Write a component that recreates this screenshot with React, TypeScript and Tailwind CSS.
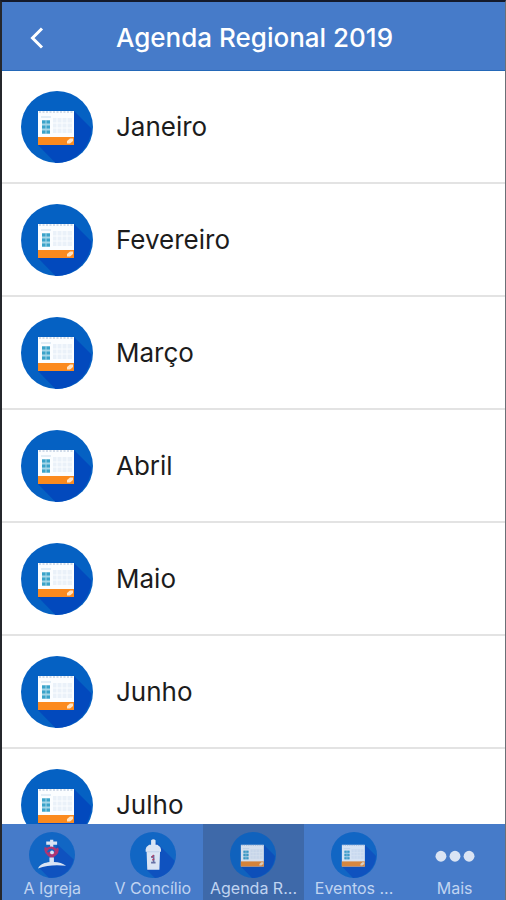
import React, { useState } from "react";

interface IconProps {
  className?: string;
}

interface Tab {
  name: string;
  icon: React.FC<IconProps>;
}

const CalendarIcon: React.FC<IconProps> = ({ className }) => (
  <svg viewBox="0 0 72 72" className={className} aria-hidden="true">
    <circle cx="36" cy="36" r="36" fill="#0561c3" />
    <path d="M53 20 L70.5 37.5 A36 36 0 0 1 34.5 72 L17 54 Z" fill="#0249bd" />
    <rect x="17" y="20" width="36" height="34" fill="#fbfdff" />
    <path d="M18 21 H52" stroke="#c3d0e2" strokeWidth="1.5" strokeDasharray="2 1.5" />
    <rect x="32" y="27" width="19" height="15" fill="#eaf1f9" />
    <path d="M36 27 V42 M41 27 V42 M46 27 V42 M32 32 H51 M32 37 H51" stroke="#fbfdff" strokeWidth="1" />
    <path d="M20 26 H30" stroke="#e2edf6" strokeWidth="2" />
    <rect x="21" y="29" width="8" height="14" fill="#a5d6e8" />
    <path d="M21 31 h3.5 M25.5 31 h3.5 M21 36 h3.5 M25.5 36 h3.5 M21 41 h3.5 M25.5 41 h3.5" stroke="#3ba3c9" strokeWidth="3" />
    <rect x="17" y="46" width="36" height="8" fill="#fb8a1e" />
    <path d="M46 52.500 V50 L49 47.500 H52 V50 L49 52.500 Z" fill="#ffe3c2" />
  </svg>
);

const ChurchIcon: React.FC<IconProps> = ({ className }) => (
  <svg viewBox="0 0 72 72" className={className} aria-hidden="true">
    <circle cx="36" cy="36" r="36" fill="#0561c3" />
    <path d="M44 19 L70 43 A36 36 0 0 1 31 71.500 L15 55 L35 50 Z" fill="#0249bd" />
    <path d="M33 12 h5 v3 h6 v5 h-6 v4 h-5 v-4 h-6 v-5 h6 Z" fill="#fff" />
    <path d="M26 24 C24 32 29 36 36 39 C43 35 47 31 44 25 M27 29 C32 22 42 24 42 31 C40 36 33 36 32 31" fill="none" stroke="#c9245d" strokeWidth="3.500" />
    <circle cx="36" cy="32" r="3" fill="#fff" />
    <path d="M32 40 h7 v7 C47 47 53 49 58 53 C43 51 28 52 14 57 C18 50 25 48 32 47 Z" fill="#fff" />
  </svg>
);

const BottleIcon: React.FC<IconProps> = ({ className }) => (
  <svg viewBox="0 0 72 72" className={className} aria-hidden="true">
    <circle cx="36" cy="36" r="36" fill="#0561c3" />
    <path d="M41 16 L70 45 A36 36 0 0 1 39 72 L26 59 Z" fill="#0249bd" />
    <path d="M33 13 Q36.500 10 40 13 V20 H43 Q48 23 48.500 27 V31 H47 L46 59 H27 L26 31 H24.500 V27 Q25 23 30 20 H33 Z" fill="#fff" />
    <path d="M27 31 H46" stroke="#c9d6ea" strokeWidth="1" />
    <path d="M37 36 V48 M33 39 h4 M33 48 h7" stroke="#6f6f9e" strokeWidth="2.500" />
    <path d="M37 36 l-3 4 M35 44 l3 -2" stroke="#d0314f" strokeWidth="2" />
  </svg>
);

const MoreIcon: React.FC<IconProps> = ({ className }) => (
  <svg viewBox="0 0 72 72" className={className} aria-hidden="true">
    <circle cx="14" cy="38" r="8.500" fill="#fff" />
    <circle cx="36" cy="38" r="8.500" fill="#fff" />
    <circle cx="58" cy="38" r="8.500" fill="#fff" />
  </svg>
);

const months = ["Janeiro", "Fevereiro", "Março", "Abril", "Maio", "Junho", "Julho"];

const tabs: Tab[] = [
  { name: "A Igreja", icon: ChurchIcon },
  { name: "V Concílio", icon: BottleIcon },
  { name: "Agenda R...", icon: CalendarIcon },
  { name: "Eventos ...", icon: CalendarIcon },
  { name: "Mais", icon: MoreIcon },
];

const App: React.FC = () => {
  const [active, setActive] = useState("Agenda R...");

  return (
    <div className="flex h-screen flex-col border-t-2 border-r border-l-2 border-t-[#141a2b] border-r-[#6b7076] border-l-[#25272c] bg-white font-['Inter','Liberation_Sans',sans-serif]">
      <header className="flex h-[69px] shrink-0 items-center border-b border-[#2468b8] bg-[#467bc9] pt-1 text-white">
        <button type="button" aria-label="Voltar" className="flex w-[114px] items-center pl-7">
          <svg viewBox="0 0 14 22" className="h-[22px] w-3.5" fill="none" aria-hidden="true">
            <path d="M12 1.500 L2.500 11 L12 20.500" stroke="currentColor" strokeWidth="3" />
          </svg>
        </button>
        <h1 className="text-[26px] leading-8 font-medium whitespace-nowrap">Agenda Regional 2019</h1>
      </header>

      <main className="min-h-0 flex-1 overflow-y-auto [scrollbar-width:none]">
        <ul>
          {months.map((month) => (
            <li key={month} className="border-b-2 border-[#e3e3e3]">
              <a href="#" className="flex h-[111px] items-center gap-[23px] pl-[19px]">
                <CalendarIcon className="size-[72px] shrink-0" />
                <span className="text-[26px] leading-8 text-[#1c1c1c]">{month}</span>
              </a>
            </li>
          ))}
        </ul>
      </main>

      <nav className="flex h-[76px] shrink-0 bg-[#467bc9]">
        {tabs.map(({ name, icon: Icon }) => (
          <button
            key={name}
            type="button"
            onClick={() => setActive(name)}
            className={`flex min-w-0 flex-1 flex-col items-center pt-2 ${active === name ? "bg-[#3e69a9]" : ""}`}
          >
            <Icon className="size-[46px] opacity-80" />
            <span className="text-base leading-5 whitespace-nowrap text-[#c0d4f1]">{name}</span>
          </button>
        ))}
      </nav>
    </div>
  );
};

export default App;
